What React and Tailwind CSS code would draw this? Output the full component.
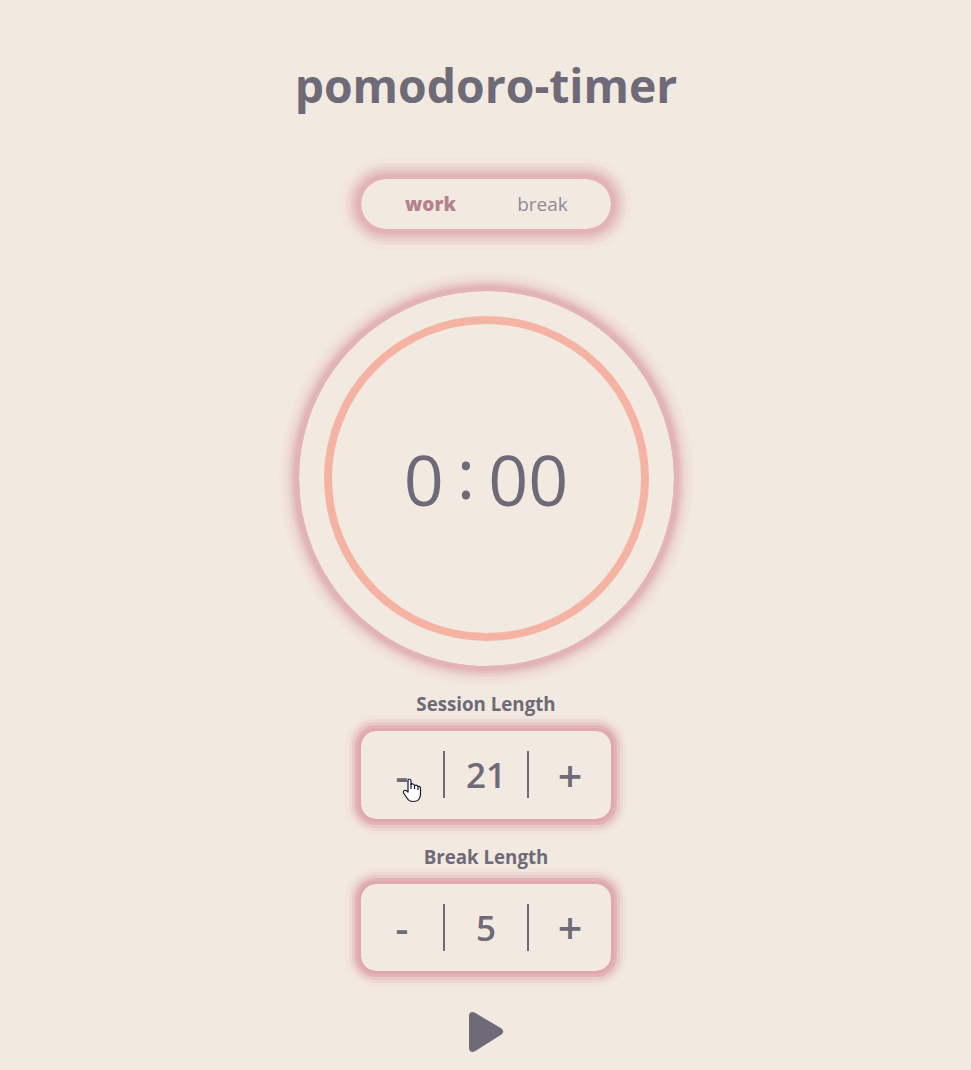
const glow =
  'shadow-[0_0_0_5px_#e3b4b6,0_0_0_8px_#e6c1c1,0_0_0_10px_#e8cac7,0_0_0_13px_#ebd4cf,0_0_0_16px_#eedcd5,0_0_0_21px_#f1e5dc]';
const dialGlow =
  'shadow-[0_0_0_5px_#e3b4b6,0_0_0_7px_#e5bebe,0_0_0_9px_#e8cac7,0_0_0_11px_#ebd4cf,0_0_0_14px_#eedcd5,0_0_0_17px_#f0e2da,0_0_0_20px_#f1e6de]';
const boxGlow =
  'shadow-[0_0_0_3px_#e0a9ac,0_0_0_6px_#e3b4b6,0_0_0_9px_#e8cac7,0_0_0_12px_#edd9d3,0_0_0_16px_#f1e4dc]';

function LengthBox({ label, value, className, boxClass, buttonClass }) {
  return (
    <section className={`flex flex-col items-center ${className}`}>
      <h2 className="relative z-10 h-[27px] pl-px text-[18.72px] leading-[27px] font-bold">{label}</h2>
      <div className={`mt-[14px] flex w-[250px] items-start rounded-[15px] pt-5 ${boxClass} ${boxGlow}`}>
        <button className={`flex-1 pl-px text-[40px] leading-[48px] font-semibold ${buttonClass}`}>-</button>
        <div className="h-[47px] w-[2px] bg-[#6e6a78]" />
        <div className="w-[82px] pl-px text-center text-[35px] leading-[47px] font-semibold">{value}</div>
        <div className="h-[47px] w-[2px] bg-[#6e6a78]" />
        <button className={`flex-1 pl-px text-[43px] leading-[48px] font-semibold ${buttonClass}`}>+</button>
      </div>
    </section>
  );
}

export default function App() {
  return (
    <main className="relative flex h-[1070px] w-full flex-col items-center overflow-hidden bg-[#f2e9e0] font-['Open_Sans',sans-serif] text-[#6e6a78]">
      <h1 className="mt-[53px] h-[65px] pl-px text-[46.3px] leading-[65px] font-bold">pomodoro-timer</h1>
      <div className={`mt-[61px] flex h-[50px] w-[250px] items-center rounded-full pr-[12px] pl-[14px] text-[19px] ${glow}`}>
        <span className="flex-1 text-center font-extrabold text-[#b4838d]">work</span>
        <span className="flex-1 text-center text-[#918b95]">break</span>
      </div>
      <div className={`mt-[62px] ml-px flex size-[375px] shrink-0 items-center justify-center rounded-full ${dialGlow}`}>
        <div className="flex size-[325px] items-center justify-center rounded-full border-8 border-[#f5b4a3] text-[70px] leading-none">
          <span>0</span>
          <span className="mx-[13px] pb-[14px] font-medium">:</span>
          <span>00</span>
        </div>
      </div>
      <LengthBox label="Session Length" value="21" className="mt-[24px]" boxClass="h-[88px]" buttonClass="pt-px" />
      <LengthBox label="Break Length" value="5" className="mt-[24px]" boxClass="h-[87px]" buttonClass="pt-0" />
      <button aria-label="start" className="mt-[40px]">
        <svg width="36" height="42" viewBox="0 0 36 42" fill="currentColor">
          <path d="M1 5C1 1.3 4 0 7 1.8L33.5 17.5Q37 20.5 33.5 23.5L7 40.2C4 42 1 40.7 1 37Z" />
        </svg>
      </button>
      <svg className="absolute top-[778px] left-[402px]" width="20" height="25" viewBox="0 0 20 25" fill="white" stroke="#17172b" strokeWidth="1.2" strokeLinejoin="round">
        <path d="M6 14V3Q6 1 7.5 1T9 3V6.5Q11.5 5 12.5 7.5Q15 6.5 16 8.5Q18.5 8 18.5 10.5V16Q18.5 19 17 21Q15.500 23.500 11 23.500Q7 23.500 5 20L1.500 15Q1 13 2.500 12.500Q4 12 6 14Z" />
        <path d="M9 6V11M12.500 7.500V11M16 8.500V12" />
      </svg>
    </main>
  );
}
